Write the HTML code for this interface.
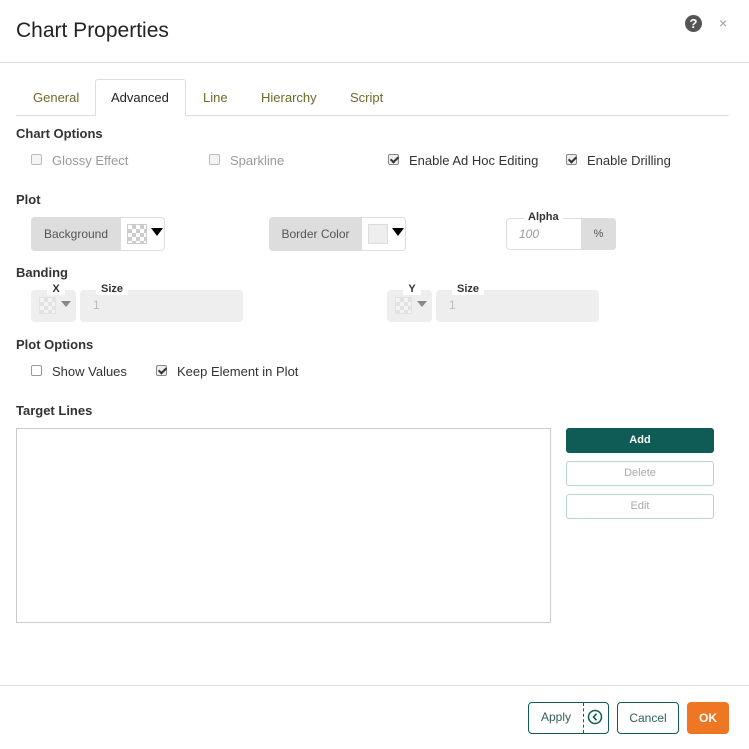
<!DOCTYPE html>
<html><head><style>
*{box-sizing:border-box;margin:0;padding:0}
body{width:749px;height:749px;background:#fff;font-family:"Liberation Sans",sans-serif;position:relative;overflow:hidden;color:#333}
.a{position:absolute}
.h{font-size:13px;font-weight:bold;color:#333}
.t{font-size:13px;color:#6b6b2a}
.cb{position:absolute;width:11px;height:11px;border:1px solid #bbb;border-radius:2px;background:#f4f4f4}
.cb.on{border-color:#888;background:#eee}
.cb.on::after{content:"";position:absolute;left:3px;top:0px;width:3px;height:6px;border:solid #333;border-width:0 2px 2px 0;transform:rotate(45deg)}
.lbl{font-size:13px}
.dis{color:#999}
.chk{background:
 linear-gradient(45deg,#ccc 25%,transparent 25%,transparent 75%,#ccc 75%),
 linear-gradient(45deg,#ccc 25%,#fff 25%,#fff 75%,#ccc 75%);background-size:8px 8px;background-position:0 0,4px 4px;border:1px solid #ccc}
.tri{width:0;height:0;border-left:6px solid transparent;border-right:6px solid transparent;border-top:8px solid #000}
.btn{position:absolute;border-radius:3px;font-size:11px;text-align:center}
</style></head><body>
<div class="a" style="left:16px;top:19px;font-size:21px;color:#222">Chart Properties</div>
<div class="a" style="left:685px;top:15px;width:17px;height:17px;border-radius:50%;background:#555;color:#fff;font-size:13px;font-weight:bold;text-align:center;line-height:17px">?</div>
<div class="a" style="left:719px;top:15px;font-size:14px;color:#999">×</div>
<div class="a" style="left:0;top:62px;width:749px;height:1px;background:#ddd"></div>

<div class="a" style="left:16px;top:115px;width:713px;height:1px;background:#ddd"></div>
<div class="a" style="left:95px;top:79px;width:91px;height:37px;border:1px solid #ddd;border-bottom:none;background:#fff;border-radius:3px 3px 0 0"></div>
<div class="a t" style="left:33px;top:90px">General</div>
<div class="a" style="left:111px;top:90px;font-size:13px;color:#222">Advanced</div>
<div class="a t" style="left:203px;top:90px">Line</div>
<div class="a t" style="left:261px;top:90px">Hierarchy</div>
<div class="a t" style="left:350px;top:90px">Script</div>

<div class="a h" style="left:16px;top:126px">Chart Options</div>
<div class="cb" style="left:31px;top:154px"></div><div class="a lbl dis" style="left:52px;top:153px">Glossy Effect</div>
<div class="cb" style="left:209px;top:154px"></div><div class="a lbl dis" style="left:230px;top:153px">Sparkline</div>
<div class="cb on" style="left:388px;top:154px"></div><div class="a lbl" style="left:409px;top:153px">Enable Ad Hoc Editing</div>
<div class="cb on" style="left:566px;top:154px"></div><div class="a lbl" style="left:587px;top:153px">Enable Drilling</div>

<div class="a h" style="left:16px;top:192px">Plot</div>
<div class="a" style="left:31px;top:217px;width:134px;height:34px;border:1px solid #ddd;border-radius:4px;background:#fff"></div>
<div class="a" style="left:31px;top:217px;width:90px;height:34px;background:#ddd;border-radius:4px 0 0 4px;font-size:12px;color:#555;line-height:34px;text-align:center">Background</div>
<div class="a chk" style="left:127px;top:224px;width:20px;height:20px"></div>
<div class="a tri" style="left:151px;top:228px"></div>
<div class="a" style="left:269px;top:217px;width:137px;height:34px;border:1px solid #ddd;border-radius:4px;background:#fff"></div>
<div class="a" style="left:269px;top:217px;width:93px;height:34px;background:#ddd;border-radius:4px 0 0 4px;font-size:12px;color:#555;line-height:34px;text-align:center">Border Color</div>
<div class="a" style="left:368px;top:224px;width:20px;height:20px;background:#eee;border:1px solid #ddd"></div>
<div class="a tri" style="left:392px;top:228px"></div>
<div class="a" style="left:506px;top:218px;width:110px;height:32px;border:1px solid #ddd;border-radius:4px"></div>
<div class="a" style="left:581px;top:218px;width:35px;height:32px;background:#ddd;border-radius:0 4px 4px 0;font-size:11px;color:#555;text-align:center;line-height:32px">%</div>
<div class="a" style="left:524px;top:211px;padding:0 4px;background:#fff;font-size:11px;font-weight:bold">Alpha</div>
<div class="a" style="left:519px;top:227px;font-size:12px;font-style:italic;color:#999">100</div>

<div class="a h" style="left:16px;top:265px">Banding</div>
<div class="a" style="left:31px;top:290px;width:45px;height:32px;background:#eee;border-radius:4px"></div>
<div class="a" style="left:47px;top:283px;width:18px;height:12px;background:#fff;font-size:11px;font-weight:bold;text-align:center">X</div>
<div class="a chk" style="left:39px;top:297px;width:17px;height:17px;opacity:.35"></div>
<div class="a" style="left:61px;top:301px;border-left:5px solid transparent;border-right:5px solid transparent;border-top:6px solid #888"></div>
<div class="a" style="left:80px;top:290px;width:163px;height:32px;background:#eee;border-radius:4px"></div>
<div class="a" style="left:96px;top:283px;padding:0 5px;background:#fff;font-size:11px;font-weight:bold">Size</div>
<div class="a" style="left:93px;top:298px;font-size:12px;color:#bbb">1</div>
<div class="a" style="left:387px;top:290px;width:45px;height:32px;background:#eee;border-radius:4px"></div>
<div class="a" style="left:403px;top:283px;width:18px;height:12px;background:#fff;font-size:11px;font-weight:bold;text-align:center">Y</div>
<div class="a chk" style="left:395px;top:297px;width:17px;height:17px;opacity:.35"></div>
<div class="a" style="left:417px;top:301px;border-left:5px solid transparent;border-right:5px solid transparent;border-top:6px solid #888"></div>
<div class="a" style="left:436px;top:290px;width:163px;height:32px;background:#eee;border-radius:4px"></div>
<div class="a" style="left:452px;top:283px;padding:0 5px;background:#fff;font-size:11px;font-weight:bold">Size</div>
<div class="a" style="left:449px;top:298px;font-size:12px;color:#bbb">1</div>

<div class="a h" style="left:16px;top:337px">Plot Options</div>
<div class="cb" style="left:31px;top:365px;border-color:#999;background:#fff"></div><div class="a lbl" style="left:52px;top:364px">Show Values</div>
<div class="cb on" style="left:156px;top:365px"></div><div class="a lbl" style="left:177px;top:364px">Keep Element in Plot</div>

<div class="a h" style="left:16px;top:403px">Target Lines</div>
<div class="a" style="left:16px;top:428px;width:535px;height:195px;border:1px solid #ccc"></div>
<div class="btn" style="left:566px;top:428px;width:148px;height:25px;background:#0e5c55;color:#fff;font-weight:bold;line-height:25px">Add</div>
<div class="btn" style="left:566px;top:461px;width:148px;height:25px;border:1px solid #b5d3cf;color:#aaa;line-height:23px">Delete</div>
<div class="btn" style="left:566px;top:494px;width:148px;height:25px;border:1px solid #b5d3cf;color:#aaa;line-height:23px">Edit</div>

<div class="a" style="left:0;top:685px;width:749px;height:1px;background:#ddd"></div>
<div class="btn" style="left:528px;top:702px;width:81px;height:32px;border:1px solid #0e5c55;border-radius:4px"></div>
<div class="a" style="left:583px;top:703px;width:0;height:30px;border-left:1px dashed #0e5c55"></div>
<div class="a" style="left:541px;top:710px;font-size:12px;color:#2f5f5a">Apply</div>
<svg class="a" style="left:587px;top:709px" width="16" height="16" viewBox="0 0 16 16"><circle cx="8" cy="8" r="6.5" fill="none" stroke="#0e5c55" stroke-width="1.5"/><path d="M9.5 4.8 L6.5 8 L9.5 11.2" fill="none" stroke="#0e5c55" stroke-width="1.6"/></svg>
<div class="btn" style="left:617px;top:702px;width:62px;height:32px;border:1px solid #0e5c55;border-radius:4px;font-size:12px;color:#2f5f5a;line-height:30px">Cancel</div>
<div class="btn" style="left:687px;top:702px;width:42px;height:32px;background:#ef7622;border-radius:4px;font-size:12px;color:#fff;font-weight:bold;line-height:32px">OK</div>
</body></html>
